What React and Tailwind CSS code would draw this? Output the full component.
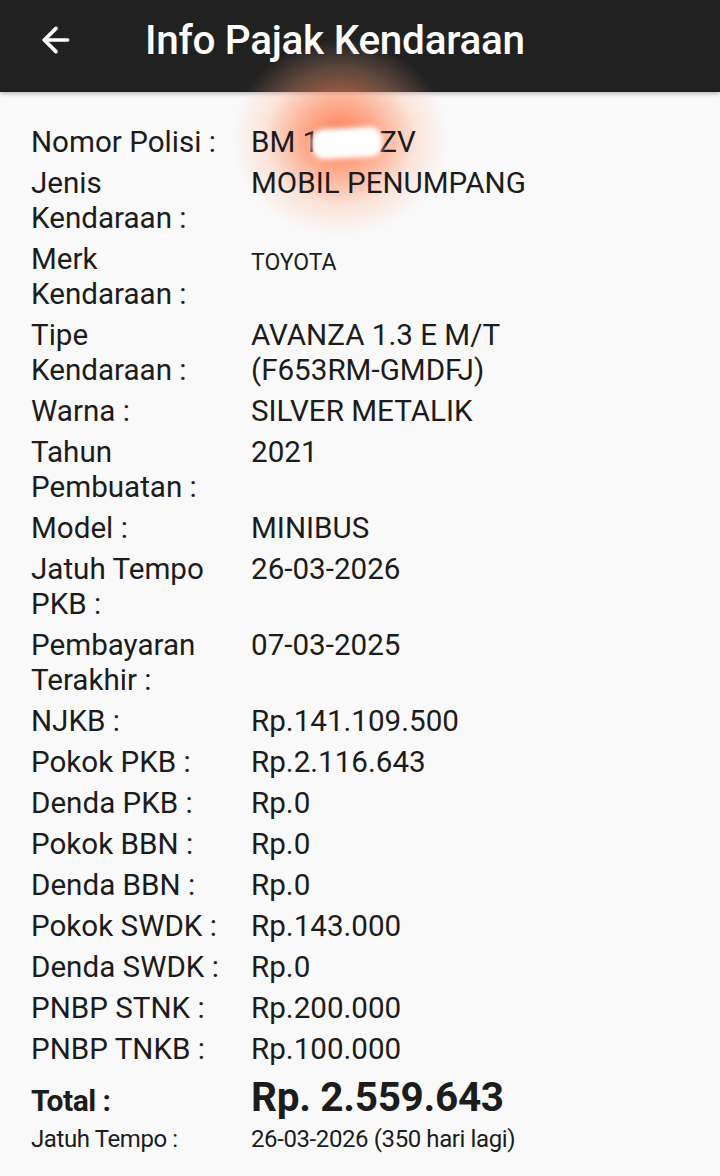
import { ArrowLeft } from 'lucide-react';

const rows = [
  { label: 'Nomor Polisi\u00a0:', value: null },
  { label: 'Jenis Kendaraan\u00a0:', value: 'MOBIL PENUMPANG' },
  { label: 'Merk Kendaraan\u00a0:', value: 'TOYOTA', small: true },
  { label: 'Tipe Kendaraan\u00a0:', value: 'AVANZA 1.3 E M/T', extra: '(F653RM-GMDFJ)' },
  { label: 'Warna\u00a0:', value: 'SILVER METALIK' },
  { label: 'Tahun Pembuatan\u00a0:', value: '2021' },
  { label: 'Model\u00a0:', value: 'MINIBUS' },
  { label: 'Jatuh Tempo PKB\u00a0:', value: '26-03-2026' },
  { label: 'Pembayaran Terakhir\u00a0:', value: '07-03-2025' },
  { label: 'NJKB\u00a0:', value: 'Rp.141.109.500' },
  { label: 'Pokok PKB\u00a0:', value: 'Rp.2.116.643' },
  { label: 'Denda PKB\u00a0:', value: 'Rp.0' },
  { label: 'Pokok BBN\u00a0:', value: 'Rp.0' },
  { label: 'Denda BBN\u00a0:', value: 'Rp.0' },
  { label: 'Pokok SWDK\u00a0:', value: 'Rp.143.000' },
  { label: 'Denda SWDK\u00a0:', value: 'Rp.0' },
  { label: 'PNBP STNK\u00a0:', value: 'Rp.200.000' },
  { label: 'PNBP TNKB\u00a0:', value: 'Rp.100.000' },
];

const Plate = () => (
  <span>
    BM 1
    <span className="relative inline-block w-[60px] h-[20px] align-middle">
      <span className="absolute left-[-7px] top-[-6px] w-[70px] h-[30px] rounded-[12px] bg-white blur-[2.5px] -rotate-3"></span>
    </span>
    ZV
  </span>
);

const InfoPajak = () => {
  return (
    <div
      className="relative min-h-screen bg-[#f9f9f9] text-[#1c1c1c] overflow-hidden"
      style={{ fontFamily: 'Roboto, "Noto Sans", sans-serif' }}
    >
      {/* Header */}
      <header className="relative z-0 h-[92px] bg-[#212121] flex items-center pb-[12px] shadow-[0_2px_4px_rgba(0,0,0,0.25)]">
        <ArrowLeft className="ml-[36px] text-white" size={40} strokeWidth={2.2} />
        <h1 className="ml-[69px] text-white text-[40.5px] font-medium tracking-[-0.3px]">
          Info Pajak Kendaraan
        </h1>
      </header>

      {/* glow dari foto */}
      <div
        className="absolute z-10 pointer-events-none left-[232px] top-[40px] w-[216px] h-[196px] rounded-full"
        style={{
          background:
            'radial-gradient(closest-side, rgba(255,110,65,0.9) 0%, rgba(255,130,85,0.65) 35%, rgba(255,175,140,0.28) 70%, rgba(255,220,200,0) 100%)',
        }}
      ></div>

      {/* Isi */}
      <div className="relative z-20 px-[31px] pt-[33px] pb-10">
        <div className="flex flex-col gap-[6px]">
          {rows.map((row) => (
            <div key={row.label} className="flex text-[29.6px] leading-[35px]">
              <div className="w-[220px] shrink-0 pr-[15px]">{row.label}</div>
              <div className={row.small ? 'text-[23px] self-start pt-[3px]' : ''}>
                {row.value === null ? <Plate /> : row.value}
                {row.extra && (
                  <>
                    {' '}
                    <span className="whitespace-nowrap">{row.extra}</span>
                  </>
                )}
              </div>
            </div>
          ))}
        </div>

        <div className="flex items-end mt-[8px]">
          <div className="w-[220px] shrink-0 text-[30px] font-bold leading-[36px] tracking-[-0.5px]">Total :</div>
          <div className="text-[40.5px] font-bold leading-[44px] tracking-[-0.3px]">Rp. 2.559.643</div>
        </div>
        <div className="flex mt-[6px] text-[24px] leading-[28px] tracking-[-0.4px]">
          <div className="w-[220px] shrink-0">Jatuh Tempo :</div>
          <div>26-03-2026 (350 hari lagi)</div>
        </div>
      </div>
    </div>
  );
};

export default InfoPajak;
